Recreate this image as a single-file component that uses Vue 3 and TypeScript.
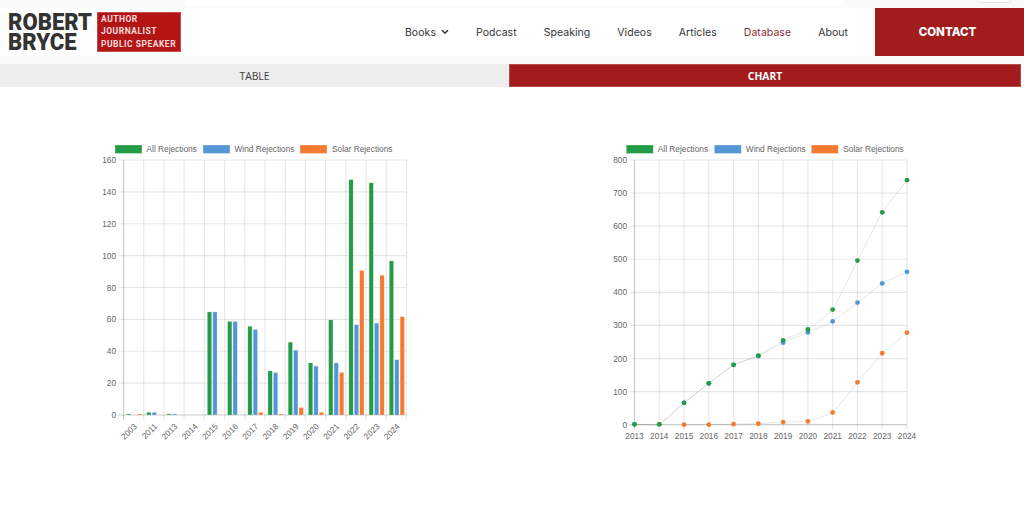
<script setup lang="ts">
const navItems = ['Podcast', 'Speaking', 'Videos', 'Articles', 'Database', 'About']
const colors = { all: '#239b47', wind: '#5597d6', solar: '#f37b2f' }
const legend = [
  { name: 'All Rejections', color: colors.all, x: 115, tx: 146.5 },
  { name: 'Wind Rejections', color: colors.wind, x: 203, tx: 234.5 },
  { name: 'Solar Rejections', color: colors.solar, x: 300, tx: 332 },
]

// Bar chart
const barYears = [2003, 2011, 2013, 2014, 2015, 2016, 2017, 2018, 2019, 2020, 2021, 2022, 2023, 2024]
const barSeries = [
  { color: colors.all, data: [1, 2, 1, 0, 65, 59, 56, 28, 46, 33, 60, 148, 146, 97] },
  { color: colors.wind, data: [0, 2, 1, 0, 65, 59, 54, 27, 41, 31, 33, 57, 58, 35] },
  { color: colors.solar, data: [1, 0, 0, 0, 0, 0, 2, 1, 5, 2, 27, 91, 88, 62] },
]
const bL = 123.5, bR = 406.5, bT = 160, bB = 415
const catW = (bR - bL) / barYears.length
const barY = (v: number) => bB - (v / 160) * (bB - bT)
const barTicks = [0, 20, 40, 60, 80, 100, 120, 140, 160]
const barVLines = Array.from({ length: barYears.length + 1 }, (_, i) => bL + i * catW)
const bars = barSeries.flatMap((s, si) =>
  s.data.flatMap((v, i) =>
    v > 0
      ? [{ key: `${si}-${i}`, color: s.color, x: bL + i * catW + 3 + si * 5.42, y: barY(v) + 0.5, h: bB - barY(v) - 0.5 }]
      : [],
  ),
)

// Line chart
const lineYears = [2013, 2014, 2015, 2016, 2017, 2018, 2019, 2020, 2021, 2022, 2023, 2024]
const lL = 634.5, lR = 907, lT = 160, lB = 424.7
const lineX = (i: number) => lL + (i * (lR - lL)) / (lineYears.length - 1)
const lineY = (v: number) => lB - (v / 800) * (lB - lT)
const lineTicks = [0, 100, 200, 300, 400, 500, 600, 700, 800]
const lineSeries = [
  { color: colors.solar, data: [null, null, 0, 0, 2, 3, 8, 10, 37, 128, 216, 278] },
  { color: colors.wind, data: [1, 1, 66, 125, 181, 207, 248, 279, 312, 369, 427, 462] },
  { color: colors.all, data: [1, 1, 66, 125, 181, 209, 255, 288, 348, 496, 642, 739] },
].map((s) => {
  const pts = s.data.flatMap((v, i) => (v === null ? [] : [{ x: lineX(i), y: lineY(v) }]))
  let d = ''
  pts.forEach((p, i) => {
    if (i === 0) {
      d = `M${p.x} ${p.y}`
      return
    }
    const p0 = pts[i - 1]
    const pm = pts[i - 2] ?? p0
    const pn = pts[i + 1] ?? p
    const t = 0.05
    d += ` C${p0.x + (p.x - pm.x) * t} ${p0.y + (p.y - pm.y) * t} ${p.x - (pn.x - p0.x) * t} ${p.y - (pn.y - p0.y) * t} ${p.x} ${p.y}`
  })
  return { color: s.color, pts, d }
})
</script>

<template>
  <div class="page">
    <div class="topstrip">
      <div class="topwhite"></div>
      <div class="toppill"></div>
    </div>
    <header class="header">
      <div class="logo">
        <div class="logo-name">
          <span>ROBERT</span>
          <span>BRYCE</span>
        </div>
        <div class="logo-tag">
          <span>AUTHOR</span>
          <span>JOURNALIST</span>
          <span>PUBLIC SPEAKER</span>
        </div>
      </div>
      <nav class="nav">
        <a class="nav-link">
          Books
          <svg class="chevron" width="8" height="6" viewBox="0 0 8 6">
            <path d="M1 1.2 L4 4.2 L7 1.2" fill="none" stroke="#3a3a3a" stroke-width="1.6" />
          </svg>
        </a>
        <a v-for="item in navItems" :key="item" class="nav-link" :class="{ active: item === 'Database' }">{{ item }}</a>
      </nav>
      <a class="contact">CONTACT</a>
    </header>
    <div class="gap"></div>
    <div class="tabs">
      <div class="tab">TABLE</div>
      <div class="tab on">CHART</div>
    </div>
    <svg class="charts" width="1024" height="419" viewBox="0 87 1024 419">
      <g v-for="offset in [0, 511.3]" :key="offset" :transform="`translate(${offset} 0)`">
        <g v-for="l in legend" :key="l.name">
          <rect :x="l.x" y="145" width="27" height="8.5" :fill="l.color" stroke="#fff" stroke-opacity="0.3" />
          <text class="t" :x="l.tx" y="152">{{ l.name }}</text>
        </g>
      </g>

      <!-- bar chart -->
      <g>
        <line v-for="(x, i) in barVLines" :key="i" :x1="x" :x2="x" :y1="bT" :y2="bB + 5" class="grid" :class="{ axis: i === 0 }" />
        <line v-for="v in barTicks" :key="v" :x1="bL - 5" :x2="bR" :y1="barY(v)" :y2="barY(v)" class="grid" :class="{ axis: v === 0 }" />
        <text v-for="v in barTicks" :key="v" class="t" text-anchor="end" :x="116" :y="barY(v) + 3">{{ v }}</text>
        <rect v-for="b in bars" :key="b.key" :x="b.x" :y="b.y" width="4.3" :height="b.h" :fill="b.color" stroke="#fff" stroke-opacity="0.35" stroke-width="0.6" />
        <text
          v-for="(y, i) in barYears"
          :key="y"
          class="t"
          text-anchor="end"
          :transform="`translate(${bL + (i + 0.5) * catW + 4} 427) rotate(-45)`"
        >{{ y }}</text>
      </g>

      <!-- line chart -->
      <g>
        <line v-for="(y, i) in lineYears" :key="y" :x1="lineX(i)" :x2="lineX(i)" :y1="lT" :y2="lB + 5" class="grid" :class="{ axis: i === 0 }" />
        <line v-for="v in lineTicks" :key="v" :x1="lL - 5" :x2="lR" :y1="lineY(v)" :y2="lineY(v)" class="grid" :class="{ axis: v === 0 }" />
        <text v-for="v in lineTicks" :key="v" class="t" text-anchor="end" :x="627" :y="lineY(v) + 3">{{ v }}</text>
        <text v-for="(y, i) in lineYears" :key="y" class="t" text-anchor="middle" :x="lineX(i)" :y="439">{{ y }}</text>
        <path v-for="s in lineSeries" :key="s.color" :d="s.d" fill="none" stroke="#000" stroke-opacity="0.1" stroke-width="1" />
        <g v-for="s in lineSeries" :key="s.color">
          <circle v-for="(p, i) in s.pts" :key="i" :cx="p.x" :cy="p.y" r="2.4" :fill="s.color" />
        </g>
      </g>
    </svg>
  </div>
</template>

<style scoped>
.page {
  width: 1024px;
  height: 506px;
  overflow: hidden;
  background: #fff;
  display: flex;
  flex-direction: column;
}
.topstrip {
  position: relative;
  height: 8px;
  background: #fafafa;
  display: flex;
  justify-content: center;
}
.topwhite {
  width: 658px;
  height: 6px;
  margin-left: 5px;
  background: #fff;
  border-radius: 0 0 4px 4px;
}
.toppill {
  position: absolute;
  left: 977px;
  top: -2px;
  width: 34px;
  height: 5px;
  box-sizing: border-box;
  border: 1px solid #e6e6e6;
  border-radius: 3px;
  background: #fff;
}
.header {
  height: 48px;
  background: #fff;
  display: flex;
  align-items: stretch;
}
.logo {
  display: flex;
  align-items: center;
  gap: 6px;
  padding-left: 8px;
}
.logo-name {
  width: 83px;
  display: flex;
  flex-direction: column;
  font-family: Roboto, sans-serif;
  font-weight: 900;
  font-size: 24px;
  line-height: 20px;
  color: #333;
}
.logo-name span {
  display: block;
  white-space: nowrap;
  transform: scaleX(0.92);
  transform-origin: left center;
}
.logo-tag {
  width: 84px;
  height: 40px;
  box-sizing: border-box;
  padding-left: 3px;
  background: #b31414;
  border: 1px solid #c64a4a;
  display: flex;
  flex-direction: column;
  justify-content: space-around;
  font-family: Roboto, sans-serif;
  font-weight: 700;
  font-size: 8.5px;
  letter-spacing: 0.5px;
  line-height: 11px;
  color: #f6dcdc;
  white-space: nowrap;
}
.nav {
  margin-left: auto;
  display: flex;
  align-items: center;
  gap: 27px;
  padding-right: 27px;
}
.nav-link {
  font-family: Inter, sans-serif;
  font-size: 10.5px;
  letter-spacing: 0.05px;
  color: #333;
  display: flex;
  align-items: center;
  gap: 5px;
}
.nav-link.active {
  color: #8f2b35;
}
.chevron {
  display: block;
}
.contact {
  width: 149px;
  box-sizing: border-box;
  padding-right: 4px;
  background: #a31c1c;
  color: #fff;
  font-family: Inter, sans-serif;
  font-weight: 800;
  font-size: 11.5px;
  display: flex;
  align-items: center;
  justify-content: center;
}
.gap {
  height: 8px;
  background: #fafafa;
}
.tabs {
  display: grid;
  grid-template-columns: 509px 512px;
  height: 23px;
}
.tab {
  display: flex;
  align-items: center;
  justify-content: center;
  background: #ededed;
  color: #3d3d3d;
  font-family: 'Open Sans', sans-serif;
  font-size: 10.3px;
}
.tab.on {
  background: #a31c1c;
  border: 1px solid #b84a4a;
  box-sizing: border-box;
  color: #fff;
  font-weight: 700;
}
.charts {
  display: block;
  flex: none;
}
.t {
  font-family: 'Liberation Sans', Arial, sans-serif;
  font-size: 8.3px;
  fill: #666;
}
.grid {
  stroke: #000;
  stroke-opacity: 0.09;
  stroke-width: 1.2;
}
.grid.axis {
  stroke-opacity: 0.2;
}
</style>

<style>
body {
  background: #fff;
}
</style>
